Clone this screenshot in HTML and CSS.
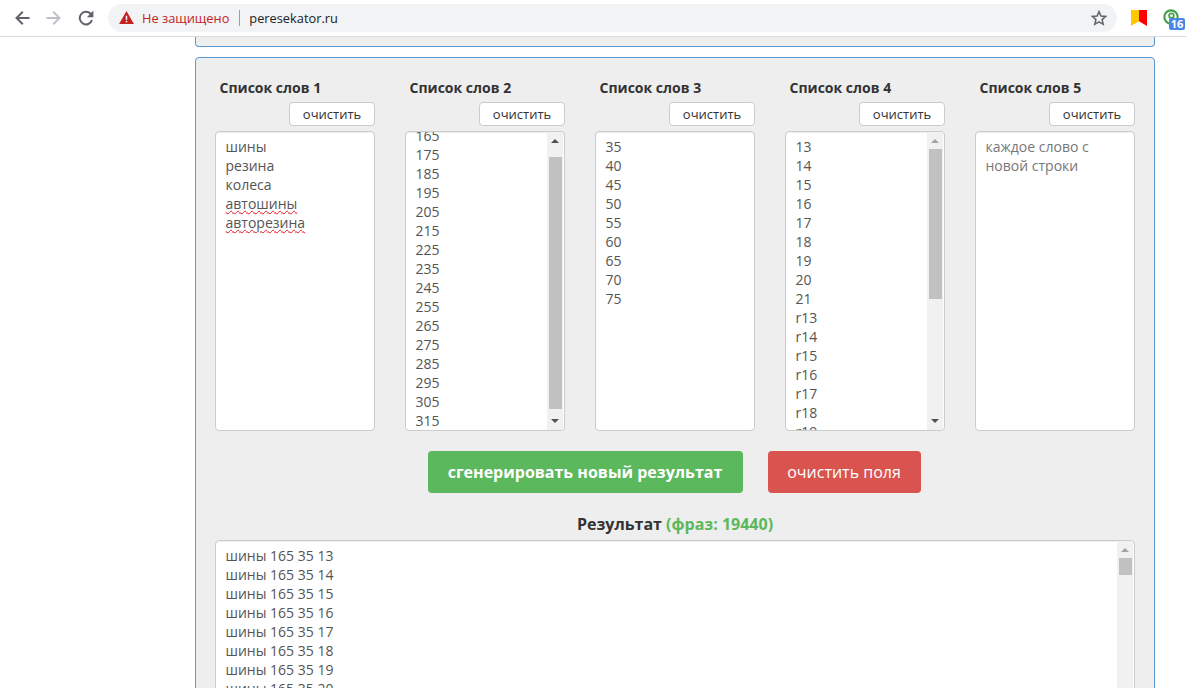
FILE: index.html
```html
<!DOCTYPE html>
<html lang="ru">
<head>
<meta charset="utf-8">
<title>peresekator.ru</title>
<link rel="stylesheet" href="styles.css">
</head>
<body>
<header class="toolbar">
  <svg class="nav-icon" viewBox="0 0 16 16"><path d="M15.500 8H2.500M8.800 1.700 2.500 8l6.300 6.300" fill="none" stroke="#5f6368" stroke-width="2"/></svg>
  <svg class="nav-icon" viewBox="0 0 16 16"><path d="M.5 8h13M7.200 1.700 13.500 8l-6.300 6.300" fill="none" stroke="#bdc1c6" stroke-width="2"/></svg>
  <svg class="nav-icon" viewBox="0 0 16 16"><path d="M14 10.200A6.300 6.300 0 1 1 12.600 3.700L14 5.200" fill="none" stroke="#5f6368" stroke-width="2"/><path d="M15.400.6v6.600H8.800z" fill="#5f6368"/></svg>
  <div class="omnibox">
    <svg class="warn" viewBox="0 0 16 14"><path d="M8 0 16 14H0z" fill="#c5221f"/><path d="M7.200 5h1.600v4.400H7.200zM7.200 10.400h1.600V12H7.200z" fill="#fff"/></svg>
    <span class="insecure">Не защищено</span>
    <span class="sep"></span>
    <span class="url">peresekator.ru</span>
    <svg class="star" viewBox="0 0 16 16"><path d="M8 1.600 9.900 6l4.800.4-3.600 3.200 1.100 4.700L8 11.800l-4.200 2.500 1.100-4.700-3.600-3.200L6.100 6z" fill="none" stroke="#5f6368" stroke-width="1.500"/></svg>
  </div>
  <div class="extensions">
    <svg class="ext-flag" viewBox="0 0 16 16"><path d="M0 0h8v11.200L0 16z" fill="#ffc800"/><path d="M8 0h8v16l-8-4.800z" fill="#f00"/></svg>
    <div class="ext-seo">
      <svg viewBox="0 0 18 18"><circle cx="9" cy="9" r="7.500" fill="none" stroke="#43a047" stroke-width="2.400"/><circle cx="9.500" cy="7.500" r="2.600" fill="none" stroke="#43a047" stroke-width="2"/></svg>
      <span class="ext-badge">16</span>
    </div>
  </div>
</header>

<main class="page">
  <div class="panel-stub"></div>
  <section class="panel">
    <div class="lists">
      <div class="list">
        <h4 class="list-title">Список слов 1</h4>
        <div class="clear-row"><button class="btn-clear">очистить</button></div>
        <div class="box box-list">
          <div class="lines">
            <div>шины</div><div>резина</div><div>колеса</div>
            <div><span class="misspelled">автошины</span></div>
            <div><span class="misspelled">авторезина</span></div>
          </div>
        </div>
      </div>

      <div class="list">
        <h4 class="list-title">Список слов 2</h4>
        <div class="clear-row"><button class="btn-clear">очистить</button></div>
        <div class="box box-list">
          <div class="lines lines-scrolled">
            <div>165</div><div>175</div><div>185</div><div>195</div><div>205</div><div>215</div><div>225</div><div>235</div><div>245</div><div>255</div><div>265</div><div>275</div><div>285</div><div>295</div><div>305</div><div>315</div><div>325</div>
          </div>
          <div class="scrollbar">
            <span class="arrow-up dark"></span>
            <span class="thumb" style="top:25px;height:252px"></span>
            <span class="arrow-down dark"></span>
          </div>
        </div>
      </div>

      <div class="list">
        <h4 class="list-title">Список слов 3</h4>
        <div class="clear-row"><button class="btn-clear">очистить</button></div>
        <div class="box box-list">
          <div class="lines">
            <div>35</div><div>40</div><div>45</div><div>50</div><div>55</div><div>60</div><div>65</div><div>70</div><div>75</div>
          </div>
        </div>
      </div>

      <div class="list">
        <h4 class="list-title">Список слов 4</h4>
        <div class="clear-row"><button class="btn-clear">очистить</button></div>
        <div class="box box-list">
          <div class="lines">
            <div>13</div><div>14</div><div>15</div><div>16</div><div>17</div><div>18</div><div>19</div><div>20</div><div>21</div><div>r13</div><div>r14</div><div>r15</div><div>r16</div><div>r17</div><div>r18</div><div>r19</div>
          </div>
          <div class="scrollbar">
            <span class="arrow-up"></span>
            <span class="thumb" style="top:17px;height:150px"></span>
            <span class="arrow-down dark"></span>
          </div>
        </div>
      </div>

      <div class="list">
        <h4 class="list-title">Список слов 5</h4>
        <div class="clear-row"><button class="btn-clear">очистить</button></div>
        <div class="box box-list">
          <div class="lines placeholder">каждое слово с<br>новой строки</div>
        </div>
      </div>
    </div>

    <div class="actions">
      <button class="btn-generate">сгенерировать новый результат</button>
      <button class="btn-reset">очистить поля</button>
    </div>

    <h3 class="result-title">Результат <span class="count">(фраз: 19440)</span></h3>
    <div class="box box-result">
      <div class="lines">
        <div>шины 165 35 13</div><div>шины 165 35 14</div><div>шины 165 35 15</div><div>шины 165 35 16</div><div>шины 165 35 17</div><div>шины 165 35 18</div><div>шины 165 35 19</div><div>шины 165 35 20</div>
      </div>
      <div class="scrollbar">
        <span class="arrow-up"></span>
        <span class="thumb" style="top:17px;height:17px"></span>
      </div>
    </div>
  </section>
</main>
</body>
</html>
```
FILE: styles.css
```css
* { box-sizing: border-box; }
html, body { margin: 0; height: 688px; overflow: hidden; background: #fff; }
body { font-family: "Open Sans", sans-serif; font-size: 14px; color: #555; }

.toolbar {
  display: flex;
  align-items: center;
  height: 37px;
  padding: 0 1px 1px 14px;
  border-bottom: 1px solid #dcdcdc;
  background: #fff;
}
.nav-icon { width: 16px; height: 16px; margin-right: 16px; flex: none; }
.omnibox {
  display: flex;
  flex: none;
  align-items: center;
  width: 1009px;
  height: 28px;
  margin-left: -2px;
  padding: 0 10px 0 11px;
  border-radius: 14px;
  background: #f1f3f4;
  font-size: 12.8px;
}
.warn { width: 15px; height: 13px; flex: none; }
.insecure { margin-left: 8px; color: #c5221f; }
.sep { width: 1px; height: 16px; margin: 0 9px 0 10px; background: #9aa0a6; }
.url { color: #202124; }
.star { width: 16px; height: 16px; margin-left: auto; }
.extensions { display: flex; align-items: center; gap: 16px; margin-left: 14px; }
.ext-flag { width: 16px; height: 16px; display: block; }
.ext-seo { position: relative; width: 22px; height: 22px; margin-top: 4px; }
.ext-seo svg { width: 16px; height: 16px; display: block; }
.ext-badge {
  position: absolute;
  left: 6px;
  top: 9px;
  width: 16px;
  height: 12px;
  border-radius: 2px;
  background: #4a86e8;
  color: #fff;
  font-size: 11px;
  font-weight: 700;
  line-height: 12px;
  text-align: center;
}

.page { width: 960px; margin-left: 195px; }
.panel-stub {
  height: 10px;
  border: 1px solid #5b9bd5;
  border-top: 0;
  border-radius: 0 0 4px 4px;
  background: #eee;
}
.panel {
  height: 700px;
  margin-top: 10px;
  padding: 20px 19px 0;
  border: 1px solid #5b9bd5;
  border-radius: 4px;
  background: #eee;
}

.lists { display: flex; gap: 30px; }
.list { width: 160px; }
.list-title {
  margin: 0;
  padding-left: 4.500px;
  color: #333;
  font-size: 14px;
  font-weight: 700;
  line-height: 20px;
}
.clear-row { display: flex; justify-content: flex-end; margin-top: 4px; }
.btn-clear {
  width: 86px;
  height: 24px;
  padding: 0;
  border: 1px solid #ccc;
  border-radius: 4px;
  background: #fff;
  color: #333;
  font: 13px/22px "Open Sans", sans-serif;
}

.box {
  position: relative;
  overflow: hidden;
  border: 1px solid #ccc;
  border-radius: 4px;
  background: #fff;
  box-shadow: inset 0 1px 1px rgba(0, 0, 0, .075);
}
.box-list { height: 300px; margin-top: 5px; }
.box-result { height: 300px; }
.lines { padding: 5px 9.500px; line-height: 19px; }
.lines-scrolled { padding-top: 0; margin-top: -6px; }
.placeholder { color: #777; }
.misspelled { text-decoration: underline wavy #e8141c 1px; text-underline-offset: 1px; }

.scrollbar {
  position: absolute;
  top: 0;
  right: 1px;
  bottom: 0;
  width: 16px;
  background: #f1f1f1;
}
.thumb { position: absolute; left: 2px; width: 13px; background: #c1c1c1; }
.arrow-up, .arrow-down {
  position: absolute;
  left: 4px;
  width: 0;
  height: 0;
  border-left: 4px solid transparent;
  border-right: 4px solid transparent;
}
.arrow-up { top: 7px; border-bottom: 4px solid #a3a3a3; }
.arrow-down { bottom: 7px; border-top: 4px solid #a3a3a3; }
.arrow-up.dark { border-bottom-color: #505050; }
.arrow-down.dark { border-top-color: #505050; }

.actions { display: flex; justify-content: center; gap: 25px; margin-top: 20px; padding-right: 2px; }
.btn-generate, .btn-reset {
  height: 42px;
  padding: 0;
  border: 0;
  border-radius: 4px;
  color: #fff;
  font-family: "Open Sans", sans-serif;
}
.btn-generate { width: 315px; background: #5cb85c; font-size: 16px; font-weight: 700; }
.btn-reset { width: 153px; background: #d9534f; font-size: 16px; }

.result-title {
  margin: 21px 0 5px;
  color: #333;
  font-size: 16px;
  font-weight: 700;
  line-height: 21px;
  text-align: center;
}
.count { color: #5cb85c; }
```
